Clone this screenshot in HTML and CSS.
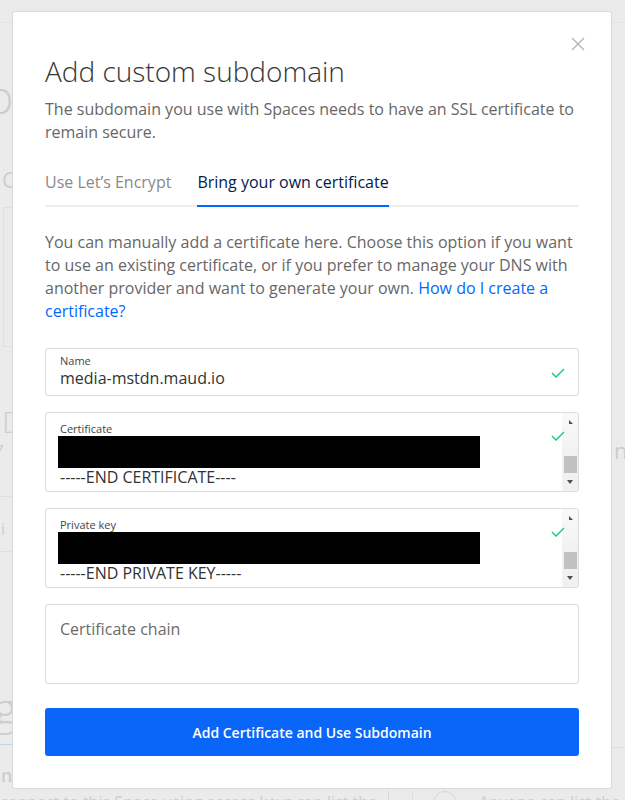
FILE: index.html
```html
<!DOCTYPE html>
<html lang="en">
<head>
<meta charset="utf-8">
<title>Add custom subdomain</title>
<link rel="stylesheet" href="styles.css">
</head>
<body>
<div class="page">
  <div class="topbar"></div>
  <div class="bg-main">
    <div class="bg-left">
      <div class="bg-title">p</div>
      <div class="bg-sub">C</div>
      <div class="bg-card"></div>
      <div class="bg-head">D</div>
      <div class="bg-small">7</div>
      <div class="bg-row">ai</div>
      <div class="bg-big">g</div>
      <div class="bg-rule"></div>
      <div class="bg-small2">in</div>
    </div>
    <div class="bg-right">
      <div class="bg-rn">n</div>
      <div class="bg-rrule"></div>
    </div>
  </div>
  <div class="bg-bottom">
    <div class="bg-bl">connect to this Space using access keys can list the</div>
    <div class="bg-br"><span class="bg-radio"></span>Anyone can list the c</div>
  </div>
</div>

<div class="modal">
  <button class="close" aria-label="Close">
    <svg width="14" height="14" viewBox="0 0 14 14"><path d="M1 1L13 13M13 1L1 13" stroke="#b5b5b5" stroke-width="1.4" fill="none"/></svg>
  </button>
  <h1 class="title">Add custom subdomain</h1>
  <p class="lead">The subdomain you use with Spaces needs to have an SSL certificate to remain secure.</p>

  <div class="tabs">
    <div class="tab">Use Let’s Encrypt</div>
    <div class="tab active">Bring your own certificate</div>
  </div>

  <p class="desc">You can manually add a certificate here. Choose this option if you want to use an existing certificate, or if you prefer to manage your DNS with another provider and want to generate your own. <a href="#">How do I create a certificate?</a></p>

  <div class="field name">
    <div class="label">Name</div>
    <div class="value">media-mstdn.maud.io</div>
    <svg class="check" width="14" height="10" viewBox="0 0 14 10"><path d="M1 5l4 4 8-8" stroke="#1bd07a" stroke-width="1.5" fill="none"/></svg>
  </div>

  <div class="field area">
    <div class="area-body">
      <div class="label">Certificate</div>
      <div class="redact"></div>
      <div class="value end">-----END CERTIFICATE----</div>
    </div>
    <span class="fade"></span>
    <svg class="check" width="14" height="10" viewBox="0 0 14 10"><path d="M1 5l4 4 8-8" stroke="#1bd07a" stroke-width="1.5" fill="none"/></svg>
    <div class="scrollbar">
      <span class="arr-up"></span>
      <span class="thumb"></span>
      <span class="arr-down"></span>
    </div>
  </div>

  <div class="field area">
    <div class="area-body">
      <div class="label">Private key</div>
      <div class="redact"></div>
      <div class="value end">-----END PRIVATE KEY-----</div>
    </div>
    <span class="fade"></span>
    <svg class="check" width="14" height="10" viewBox="0 0 14 10"><path d="M1 5l4 4 8-8" stroke="#1bd07a" stroke-width="1.5" fill="none"/></svg>
    <div class="scrollbar">
      <span class="arr-up"></span>
      <span class="thumb"></span>
      <span class="arr-down"></span>
    </div>
  </div>

  <div class="field chain">
    <div class="placeholder">Certificate chain</div>
  </div>

  <button class="submit">Add Certificate and Use Subdomain</button>
</div>
</body>
</html>
```
FILE: styles.css
```css
html, body {
  margin: 0;
  padding: 0;
}
body {
  background: #ebebeb;
  font-family: "Open Sans", "DejaVu Sans", sans-serif;
  width: 625px;
  height: 800px;
  overflow: hidden;
  position: relative;
}

/* dimmed background page */
.page {
  color: #cdcdcd;
}
.topbar {
  height: 22px;
  border-bottom: 1px solid #e3e3e3;
}
.bg-main {
  display: flex;
  justify-content: space-between;
  height: 766px;
}
.bg-left {
  width: 12px;
  display: flex;
  flex-direction: column;
}
.bg-title {
  font-size: 46px;
  font-weight: 300;
  line-height: 50px;
  margin-top: 48px;
  margin-left: -14px;
}
.bg-sub {
  font-size: 22px;
  margin-top: 44px;
  line-height: 28px;
  margin-left: 2px;
}
.bg-card {
  height: 138px;
  border-left: 1px solid #e0e0e0;
  border-top: 1px solid #e0e0e0;
  border-bottom: 1px solid #e0e0e0;
  margin: 14px 0 0 3px;
}
.bg-head {
  font-size: 30px;
  line-height: 34px;
  margin-top: 58px;
  margin-left: 2px;
  font-weight: 300;
}
.bg-small {
  font-size: 15px;
  line-height: 20px;
  margin-top: 0;
  margin-left: -5px;
}
.bg-row {
  font-size: 16px;
  line-height: 22px;
  border-top: 1px solid #e0e0e0;
  border-bottom: 1px solid #e0e0e0;
  padding: 21px 0 11px;
  margin-top: 37px;
  margin-left: -8px;
}
.bg-big {
  font-size: 44px;
  font-weight: 300;
  margin-top: 134px;
  margin-left: -6px;
  line-height: 44px;
}
.bg-rule {
  border-top: 1px solid #c6d4ea;
  margin-top: 14px;
}
.bg-small2 {
  font-size: 18px;
  font-weight: 600;
  line-height: 22px;
  margin-top: 19px;
  margin-left: -4px;
}
.bg-right {
  width: 13px;
  display: flex;
  flex-direction: column;
}
.bg-rn {
  font-size: 22px;
  line-height: 28px;
  margin-top: 413px;
  margin-left: 2px;
}
.bg-rrule {
  border-top: 1px solid #dedede;
  margin-top: 283px;
}
.bg-bottom {
  display: flex;
  font-size: 16px;
  line-height: 22px;
  white-space: nowrap;
  padding-top: 2px;
}
.bg-bl {
  flex: 0 0 388px;
  border-right: 1px solid #d6d6d6;
  overflow: hidden;
}
.bg-br {
  flex: 0 0 auto;
  display: flex;
  align-items: flex-start;
  gap: 22px;
  padding-left: 20px;
  margin-left: 23px;
  border-left: 1px solid #dedede;
}
.bg-radio {
  width: 22px;
  height: 22px;
  margin-top: 0;
  border: 1px solid #d6d6d6;
  border-radius: 50%;
}

/* modal (overlay) */
.modal {
  position: absolute;
  top: 11px;
  left: 12px;
  width: 534px;
  padding: 40px 32px 32px 32px;
  background: #fff;
  border: 1px solid #d9d9d9;
  border-radius: 3px;
  color: #676767;
}
.close {
  position: absolute;
  top: 25px;
  right: 26px;
  background: none;
  border: 0;
  padding: 0;
  width: 14px;
  height: 14px;
  cursor: pointer;
}
.close svg {
  display: block;
}
.title {
  margin: 0;
  font-size: 28px;
  line-height: 38px;
  font-weight: 300;
  color: #363636;
}
.lead {
  margin: 8px 0 0;
  font-size: 16px;
  line-height: 23px;
}
.tabs {
  display: flex;
  gap: 26px;
  margin-top: 27px;
  border-bottom: 2px solid #eeeeee;
}
.tab {
  font-size: 16px;
  line-height: 23px;
  padding-bottom: 11px;
  color: #8a8a8a;
  margin-bottom: -2px;
  border-bottom: 2px solid transparent;
}
.tab.active {
  color: #031b4e;
  border-bottom-color: #0069ff;
}
.desc {
  margin: 24px 0 0;
  font-size: 16px;
  line-height: 23px;
}
.desc a {
  color: #0069ff;
  text-decoration: none;
}

.field {
  border: 1px solid #dcdcdc;
  border-radius: 3px;
  position: relative;
  box-sizing: border-box;
}
.label {
  font-size: 11px;
  line-height: 13px;
  color: #444;
}
.value {
  font-size: 16px;
  line-height: 22px;
  color: #333;
}
.check {
  position: absolute;
  right: 13px;
  display: block;
}
.field.name {
  margin-top: 25px;
  height: 48px;
  padding: 5px 14px 0;
}
.field.name .check {
  top: 19px;
}
.field.area {
  margin-top: 16px;
  height: 80px;
  display: flex;
  overflow: hidden;
}
.area-body {
  flex: 1;
  padding: 9px 0 0 14px;
  overflow: hidden;
}
.redact {
  width: 422px;
  height: 32px;
  background: #000;
  margin: 1px 0 0 -2px;
}
.value.end {
  line-height: 18px;
}
.fade {
  position: absolute;
  top: 16px;
  right: 17px;
  width: 66px;
  height: 16px;
  background: linear-gradient(to right, rgba(255,255,255,0), #fff 60%);
}
.field.area .check {
  top: 18px;
  right: 13px;
}
.scrollbar {
  width: 16px;
  background: linear-gradient(to bottom, #fafafa 0, #f1f1f1 40px);
  display: flex;
  flex-direction: column;
  align-items: center;
}
.arr-up {
  margin-top: 7px;
  width: 0;
  height: 0;
  border-left: 4px solid #505050;
  border-top: 4px solid transparent;
  margin-left: 2px;
}
.thumb {
  margin-top: 32px;
  width: 13px;
  height: 17px;
  background: #c1c1c1;
}
.arr-down {
  margin-top: 7px;
  width: 0;
  height: 0;
  border-left: 3px solid transparent;
  border-right: 3px solid transparent;
  border-top: 4px solid #505050;
}
.field.chain {
  margin-top: 16px;
  height: 80px;
  padding: 13px 14px 0;
}
.placeholder {
  font-size: 16px;
  line-height: 22px;
  color: #6b6b6b;
}
.submit {
  display: block;
  width: 100%;
  margin-top: 24px;
  height: 48px;
  border: 0;
  border-radius: 3px;
  background: #0a66f8;
  color: #fff;
  font-family: "Open Sans", "DejaVu Sans", sans-serif;
  font-size: 14px;
  font-weight: 600;
  cursor: pointer;
}
```
